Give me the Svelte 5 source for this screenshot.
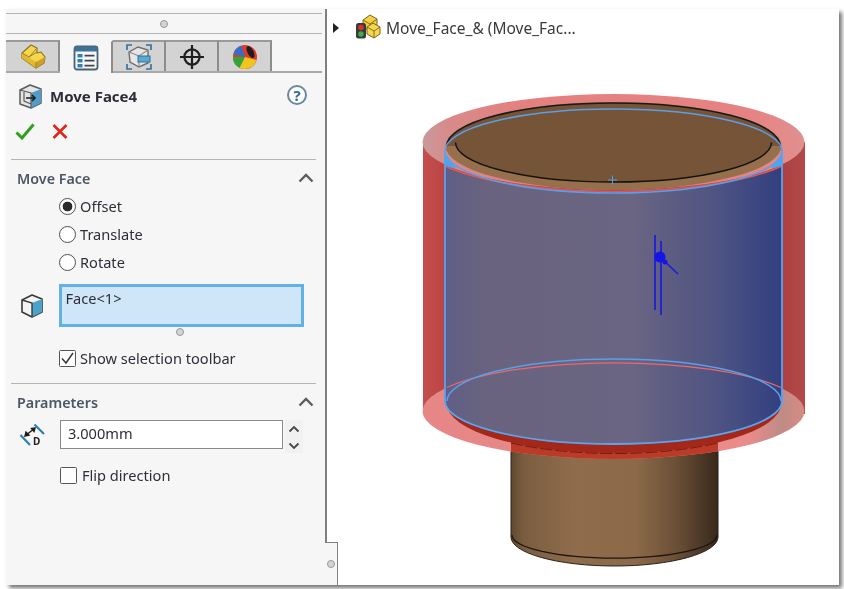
<script>
  const tabs = ['feature', 'property', 'config', 'target', 'appearance'];
  const modes = [
    { label: 'Offset', on: true },
    { label: 'Translate', on: false },
    { label: 'Rotate', on: false }
  ];
</script>

<div class="page">
  <div class="window">
    <aside class="panel">
      <div class="strip"><span class="grip"></span></div>

      <div class="tabs">
        {#each tabs as tab, i}
          <div class="tab" class:active={i === 1}>
            {#if tab === 'feature'}
              <svg width="30" height="26" viewBox="0 0 30 26">
                <path d="M5 9 14 1l6 3v5l4-1 4 5-1 6-8 5L5 14z" fill="#f6d64e" stroke="#8c7420" stroke-width="1.200" stroke-linejoin="round"/>
                <path d="M5 9l14 9v6L5 14z" fill="#e3b932"/>
                <path d="M19 18l9-5-1 6-8 5z" fill="#cfa126"/>
                <path d="M5 9l7 4 8-5M20 4l-8 9M19 18v6" fill="none" stroke="#9a8026" stroke-width="1"/>
              </svg>
            {:else if tab === 'property'}
              <svg width="26" height="26" viewBox="0 0 26 26">
                <rect x="1.500" y="1.500" width="23" height="23" rx="2.500" fill="#f4f6f7" stroke="#4a6170" stroke-width="1.800"/>
                <rect x="1.500" y="1.500" width="23" height="5" fill="#3f7396"/>
                <rect x="4.500" y="9" width="5" height="3.400" fill="#2f7fb4"/>
                <rect x="4.500" y="14" width="5" height="3.400" fill="#2f7fb4"/>
                <rect x="4.500" y="19" width="5" height="3.400" fill="#2f7fb4"/>
                <path d="M11.500 10.600h10M11.500 15.600h10M11.500 20.600h10" stroke="#40464c" stroke-width="1.800"/>
              </svg>
            {:else if tab === 'config'}
              <svg width="28" height="28" viewBox="0 0 28 28">
                <path d="M2 7V2h5M21 2h5v5M26 21v5h-5M7 26H2v-5" fill="none" stroke="#2f6f9c" stroke-width="1.600"/>
                <path d="M4 9l9-5 10 3v13l-9 4-9-5z" fill="#e6e6e6" stroke="#6d6d6d" stroke-width="1.400"/>
                <path d="M4 9l10 4 9-6M14 13v11" fill="none" stroke="#8a8a8a" stroke-width="1.100"/>
                <rect x="13" y="13" width="12" height="6" fill="#5aa9d3" stroke="#2f6f9c"/>
              </svg>
            {:else if tab === 'target'}
              <svg width="26" height="26" viewBox="0 0 26 26">
                <circle cx="13" cy="13" r="7.600" fill="none" stroke="#1f1f1f" stroke-width="2.200"/>
                <path d="M13 1v24M1 13h24" stroke="#1f1f1f" stroke-width="2.200"/>
              </svg>
            {:else}
              <svg width="26" height="26" viewBox="0 0 26 26">
                <circle cx="13" cy="13" r="12" fill="#e03a2c"/>
                <path d="M13 13 1.400 10A12 12 0 0 1 9 1.700z" fill="#2f6fd0"/>
                <path d="M13 13 1 13a12 12 0 0 0 7 10.900z" fill="#2fa53a"/>
                <path d="M13 13 7.600 23.700A12 12 0 0 0 24.500 16z" fill="#f0c61e"/>
                <ellipse cx="18.500" cy="8" rx="3" ry="6.500" transform="rotate(-28 18.500 8)" fill="#1d1d1d"/>
              </svg>
            {/if}
          </div>
        {/each}
      </div>

      <header class="head">
        <svg class="feat" width="25" height="25" viewBox="0 0 25 25">
          <path d="M2 6 12 1l11 4v14l-10 5-11-4z" fill="#e4e4e4" stroke="#5c5c5c" stroke-width="1.500" stroke-linejoin="round"/>
          <path d="M13 9l10-4v14l-10 5z" fill="#4f9cc6"/>
          <path d="M2 6l11 3v15M6 8v9l7 3" fill="none" stroke="#5c5c5c" stroke-width="1.200"/>
          <path d="M8 14h9m-3-3 3 3-3 3" fill="none" stroke="#1d1d1d" stroke-width="1.600"/>
        </svg>
        <h1>Move Face4</h1>
        <span class="help">?</span>
      </header>

      <div class="actions">
        <svg width="20" height="17" viewBox="0 0 20 17"><path d="M1.500 9.500 7 15 18.500 1.500" fill="none" stroke="#2f9f1f" stroke-width="3"/></svg>
        <svg width="16" height="15" viewBox="0 0 16 15"><path d="M1.500 1 14.500 14M14.500 1 1.500 14" fill="none" stroke="#e0261a" stroke-width="2.600"/></svg>
      </div>

      <section class="section first">
        <div class="section-title">
          <h2>Move Face</h2>
          <svg class="chev" width="16" height="10" viewBox="0 0 16 10"><path d="M1.500 8.500 8 2l6.500 6.500" fill="none" stroke="#5c5c5c" stroke-width="2.300"/></svg>
        </div>

        <div class="radios">
          {#each modes as mode}
            <div class="radio-row">
              <span class="radio" class:on={mode.on}></span>
              <span>{mode.label}</span>
            </div>
          {/each}
        </div>

        <div class="select-row">
          <svg width="24" height="26" viewBox="0 0 24 26">
            <path d="M2 7 12 2l10 4v13l-10 5-10-5z" fill="#f4f4f4" stroke="#3a3a3a" stroke-width="1.600" stroke-linejoin="round"/>
            <path d="M12 10l10-4v13l-10 5z" fill="#4ba3c9"/>
            <path d="M2 7l10 3v14" fill="none" stroke="#3a3a3a" stroke-width="1.400"/>
          </svg>
          <div class="select-box">Face&lt;1&gt;</div>
        </div>
        <div class="dot-row"><span class="grip"></span></div>

        <div class="check-row">
          <span class="check">
            <svg width="15" height="15" viewBox="0 0 15 15"><path d="M2 7.500 6 12l7-10" fill="none" stroke="#3a3a3a" stroke-width="1.500"/></svg>
          </span>
          <span>Show selection toolbar</span>
        </div>
      </section>

      <section class="section second">
        <div class="section-title">
          <h2>Parameters</h2>
          <svg class="chev" width="16" height="10" viewBox="0 0 16 10"><path d="M1.500 8.500 8 2l6.500 6.500" fill="none" stroke="#5c5c5c" stroke-width="2.300"/></svg>
        </div>

        <div class="param-row">
          <svg width="26" height="26" viewBox="0 0 26 26">
            <path d="M1.500 12 11 22M15.500 1.500 25 11" fill="none" stroke="#2f7fb4" stroke-width="2.200"/>
            <path d="M6 13 16 5M6 13l1-4 3 3zM16 5l-3.500.5 2.500 3z" fill="#1d1d1d" stroke="#1d1d1d" stroke-width="1.400"/>
            <text x="14" y="22" class="d">D</text>
          </svg>
          <div class="num-input">3.000mm</div>
          <div class="spin">
            <svg width="12" height="8" viewBox="0 0 12 8"><path d="M1.500 6.500 6 2l4.500 4.500" fill="none" stroke="#4a4a4a" stroke-width="1.900"/></svg>
            <svg width="12" height="8" viewBox="0 0 12 8"><path d="M1.500 1.500 6 6l4.500-4.500" fill="none" stroke="#4a4a4a" stroke-width="1.900"/></svg>
          </div>
        </div>

        <div class="check-row flip">
          <span class="check"></span>
          <span>Flip direction</span>
        </div>
      </section>
    </aside>

    <main class="view">
      <svg class="scene" viewBox="327 9 512 576" aria-hidden="true">
        <defs>
          <linearGradient id="blue" x1="0" x2="1" y1="0" y2="0">
            <stop offset="0" stop-color="#5f5e86"/>
            <stop offset=".12" stop-color="#69637f"/>
            <stop offset=".55" stop-color="#6a6582"/>
            <stop offset=".8" stop-color="#4f5482"/>
            <stop offset="1" stop-color="#323f80"/>
          </linearGradient>
          <linearGradient id="neck" x1="0" x2="1" y1="0" y2="0">
            <stop offset="0" stop-color="#5f4730"/>
            <stop offset=".06" stop-color="#7a5d40"/>
            <stop offset=".3" stop-color="#8f6c4b"/>
            <stop offset=".6" stop-color="#8c6a49"/>
            <stop offset=".8" stop-color="#6a4f36"/>
            <stop offset="1" stop-color="#38291c"/>
          </linearGradient>
          <linearGradient id="wall" x1="0" x2="1" y1="0" y2="0">
            <stop offset="0" stop-color="#c44f4f"/>
            <stop offset=".06" stop-color="#bb4343"/>
            <stop offset=".94" stop-color="#ad4040"/>
            <stop offset="1" stop-color="#b24a4a"/>
          </linearGradient>
          <linearGradient id="ring" x1="0" x2="1" y1="0" y2="0">
            <stop offset="0" stop-color="#c89a9a"/>
            <stop offset=".07" stop-color="#d88a8a"/>
            <stop offset=".25" stop-color="#e58080"/>
            <stop offset=".85" stop-color="#e78282"/>
            <stop offset="1" stop-color="#e09090"/>
          </linearGradient>
          <linearGradient id="ringb" x1="0" x2="1" y1="0" y2="0">
            <stop offset="0" stop-color="#e68686"/>
            <stop offset=".85" stop-color="#ea8c8c"/>
            <stop offset=".94" stop-color="#bf8c86"/>
            <stop offset="1" stop-color="#d88a84"/>
          </linearGradient>
          <clipPath id="pink"><ellipse cx="613.500" cy="411" rx="191" ry="48"/></clipPath>
        </defs>

        <!-- lower neck -->
        <path d="M511 440V537A103.500 29 0 0 0 718 537V440z" fill="url(#neck)" stroke="#2a2018" stroke-width="1"/>
        <path d="M512 535A102 23 0 0 0 717 535" fill="none" stroke="#1c1610" stroke-width="1.300"/>

        <!-- translucent red outer body -->
        <rect x="423" y="142" width="382" height="272" fill="url(#wall)"/>
        <ellipse cx="613.500" cy="411" rx="191" ry="48" fill="url(#ringb)"/>
        <rect x="511" y="436" width="207" height="30" fill="#bb3a28" clip-path="url(#pink)"/>
        <path d="M447 404A167 49 0 0 0 781 404z" fill="#a3281a"/>
        <path d="M511 443A167 49 0 0 0 718 443" fill="none" stroke="#6e2016" stroke-width="1" stroke-dasharray="12 3"/>
        <ellipse cx="613.500" cy="142" rx="191" ry="48" fill="url(#ring)"/>

        <!-- top brown face -->
        <ellipse cx="613.500" cy="146" rx="168" ry="44" fill="#96704c"/>
        <ellipse cx="613.500" cy="142.500" rx="158" ry="39.500" fill="#755438"/>
        <path d="M446 146A167.500 43 0 0 1 781 146z" fill="#755438"/>
        <path d="M455.500 142.500A158 39.500 0 0 0 771.500 142.500" fill="none" stroke="#16120e" stroke-width="1.500"/>
        <path d="M447 146A166.500 43 0 0 1 780 146" fill="none" stroke="#1a1a1a" stroke-width="1.500"/>

        <!-- selected face -->
        <path d="M445 152 445 167 456 168 450 160z M782 152 782 167 771 168 777 160z" fill="#45a7f5"/>
        <path d="M445 166A191 48 0 0 0 782 166V401A168.500 43 0 0 1 445 401z" fill="url(#blue)"/>
        <path d="M445 166A191 48 0 0 0 782 166" fill="none" stroke="#e05757" stroke-width="1.400"/>
        <path d="M447 387.500A191 48 0 0 1 781 387.500" fill="none" stroke="#e86a6a" stroke-width="1.200"/>
        <path d="M445 151A168.500 42 0 0 1 782 151" fill="none" stroke="#5a9fe8" stroke-width="1.500"/>
        <path d="M445 151A168.500 42 0 0 0 782 151" fill="none" stroke="#5a9fe8" stroke-width="1.500"/>
        <path d="M445 151V401A168.500 43 0 0 0 782 401V151" fill="none" stroke="#5aa4ee" stroke-width="1.800"/>
        <path d="M447 401A167 42 0 0 1 781 401" fill="none" stroke="#5a9fe8" stroke-width="1.500"/>
        <path d="M608 180h9M612.500 175.500v9" stroke="#4f9fe8" stroke-width="1"/>

        <!-- move handle -->
        <path d="M655 235V310M661 241V315M660 257 678 274" stroke="#1c1cdc" stroke-width="1.700" fill="none"/>
        <circle cx="660" cy="257" r="5.500" fill="#1414e6"/>
        <circle cx="665" cy="262" r="2.500" fill="#1414e6"/>
      </svg>

      <div class="tree-row">
        <svg width="9" height="10" viewBox="0 0 9 10"><path d="M1 0 7 5 1 10z" fill="#222"/></svg>
        <svg class="tree-icon" width="26" height="25" viewBox="0 0 26 25">
          <path d="M8 6l7-5 7 4v7l-7 5-7-4z" fill="#f3cf42" stroke="#7a6420" stroke-width="1"/>
          <path d="M8 6l7 4 7-5M15 10v7" fill="none" stroke="#7a6420" stroke-width=".9"/>
          <path d="M12 13l6-4 7 4v7l-6 4-7-4z" fill="#f6d64e" stroke="#7a6420" stroke-width="1"/>
          <path d="M12 13l7 4 6-4M19 17v7" fill="none" stroke="#7a6420" stroke-width=".9"/>
          <rect x="1" y="9" width="10" height="15.500" rx="2.500" fill="#3a3a3a"/>
          <circle cx="6" cy="13.500" r="2.700" fill="#d9342a"/>
          <circle cx="6" cy="20" r="2.700" fill="#3fae45"/>
        </svg>
        <span>Move_Face_&amp; (Move_Fac...</span>
      </div>

      <div class="notch"><span class="grip"></span></div>
    </main>
  </div>
</div>

<style>
  :global(body) {
    margin: 0;
    background: #fff;
  }

  .page {
    box-sizing: border-box;
    width: 844px;
    height: 589px;
    padding: 9px 5px 4px 6px;
    overflow: hidden;
    font-family: "Noto Sans", "Open Sans", sans-serif;
    font-size: 14.6px;
    color: #2e3038;
  }

  .window {
    display: flex;
    height: 100%;
    background: #fff;
    box-shadow: 3px 3px 4px rgba(0, 0, 0, 0.55);
    filter: blur(0.35px);
  }

  .panel {
    box-sizing: border-box;
    flex: 0 0 321px;
    padding-top: 4px;
    background: #f6f6f6;
    border-right: 2px solid #808080;
  }

  .grip {
    display: block;
    box-sizing: border-box;
    width: 8px;
    height: 8px;
    border: 1.500px solid #989898;
    border-radius: 50%;
    background: #d4d4d4;
  }

  .strip {
    display: flex;
    align-items: center;
    justify-content: center;
    box-sizing: border-box;
    height: 21px;
    margin-right: 3px;
    border-top: 1.500px solid #b4b4b4;
    border-bottom: 1.500px solid #b4b4b4;
  }

  .tabs {
    display: flex;
    box-sizing: border-box;
    height: 33px;
    margin: 6px 3px 0 0;
    border-bottom: 2px solid #a8a8a8;
  }

  .tab {
    display: flex;
    align-items: center;
    justify-content: center;
    box-sizing: border-box;
    width: 53px;
    height: 31px;
    background: #d3d3d3;
    border-top: 2px solid #9a9a9a;
    border-right: 2px solid #8c8c8c;
  }

  .tab:first-child {
    width: 54px;
  }

  .tab.active {
    height: 33px;
    background: #f6f6f6;
    border-top-color: #f6f6f6;
  }

  .head {
    display: flex;
    align-items: center;
    height: 46px;
    padding: 0 18px 0 12px;
  }

  .head h1 {
    flex: 1;
    margin: 0 0 0 7px;
    font-size: 15px;
    font-weight: 700;
    color: #2a2c38;
  }

  .help {
    display: flex;
    align-items: center;
    justify-content: center;
    box-sizing: border-box;
    width: 20px;
    height: 20px;
    margin-top: -2px;
    border: 2px solid #6a8a9c;
    border-radius: 50%;
    font-size: 15px;
    font-weight: 700;
    color: #2a6f96;
    background: #fdfdfd;
  }

  .actions {
    display: flex;
    align-items: center;
    gap: 17px;
    height: 24px;
    padding-left: 9px;
  }

  .section {
    margin: 0 9px 0 5px;
    border-top: 1.500px solid #b4b4b4;
  }

  .section.first {
    margin-top: 16px;
  }

  .section.second {
    margin-top: 15px;
  }

  .section-title {
    display: flex;
    align-items: center;
    justify-content: space-between;
    height: 36px;
    padding: 0 2px 0 6px;
  }

  .section-title h2 {
    margin: 0;
    font-size: 14.300px;
    font-weight: 600;
    color: #4b5764;
  }

  .radios {
    display: flex;
    flex-direction: column;
    gap: 8px;
    padding-left: 48px;
  }

  .radio-row {
    display: flex;
    align-items: center;
    gap: 4px;
    height: 20px;
  }

  .radio-row > span:last-child {
    margin-top: -1px;
  }

  .radio {
    box-sizing: border-box;
    width: 17px;
    height: 17px;
    border: 1.500px solid #4f4f4f;
    border-radius: 50%;
    background: #fff;
    flex: none;
  }

  .radio.on {
    background: radial-gradient(circle, #2a2a2a 0 4.500px, #fff 5.200px);
  }

  .select-row {
    display: flex;
    align-items: center;
    gap: 15px;
    margin-top: 12px;
    padding-left: 9px;
  }

  .select-box {
    box-sizing: border-box;
    width: 245px;
    height: 43px;
    padding: 1px 0 0 3.500px;
    border: 3px solid #62b0e8;
    background: #cfe5f8;
    line-height: 20px;
  }

  .dot-row {
    display: flex;
    justify-content: center;
    padding-left: 33px;
    margin-top: 1px;
  }

  .check-row {
    display: flex;
    align-items: center;
    gap: 4px;
    height: 20px;
    margin-top: 12px;
    padding-left: 48px;
  }

  .check {
    display: flex;
    align-items: center;
    justify-content: center;
    box-sizing: border-box;
    width: 17px;
    height: 17px;
    border: 1.500px solid #555;
    border-radius: 1.500px;
    background: #fdfdfd;
    flex: none;
  }

  .check-row.flip {
    padding-left: 49px;
    gap: 5px;
  }

  .param-row {
    display: flex;
    align-items: flex-start;
    padding-left: 8px;
  }

  .param-row > svg {
    margin-top: 3px;
    flex: none;
  }

  .d {
    font-family: "Noto Sans", sans-serif;
    font-size: 10px;
    font-weight: 700;
    fill: #222;
  }

  .num-input {
    box-sizing: border-box;
    width: 223px;
    height: 29px;
    margin-left: 15px;
    padding-left: 7px;
    border: 1.500px solid #8a8a8a;
    background: #fff;
    line-height: 24px;
  }

  .spin {
    display: flex;
    flex-direction: column;
    align-items: center;
    gap: 9px;
    box-sizing: border-box;
    width: 18px;
    height: 33px;
    margin-left: 2px;
    padding-top: 5px;
    background: #f1f1f1;
  }

  .view {
    position: relative;
    flex: 1;
    min-width: 0;
    background: #fff;
  }

  .scene {
    position: absolute;
    inset: 0;
    width: 100%;
    height: 100%;
  }

  .tree-row {
    position: relative;
    display: flex;
    align-items: center;
    height: 38px;
    padding-left: 5px;
    font-size: 15.500px;
    color: #3a3a3a;
  }

  .tree-icon {
    margin: -3px 5px 0 14px;
  }

  .notch {
    position: absolute;
    left: -2px;
    bottom: 0;
    display: flex;
    align-items: center;
    justify-content: center;
    box-sizing: border-box;
    width: 13px;
    height: 43px;
    background: #f6f6f6;
    border-top: 1.500px solid #808080;
    border-right: 1.500px solid #808080;
  }
</style>
